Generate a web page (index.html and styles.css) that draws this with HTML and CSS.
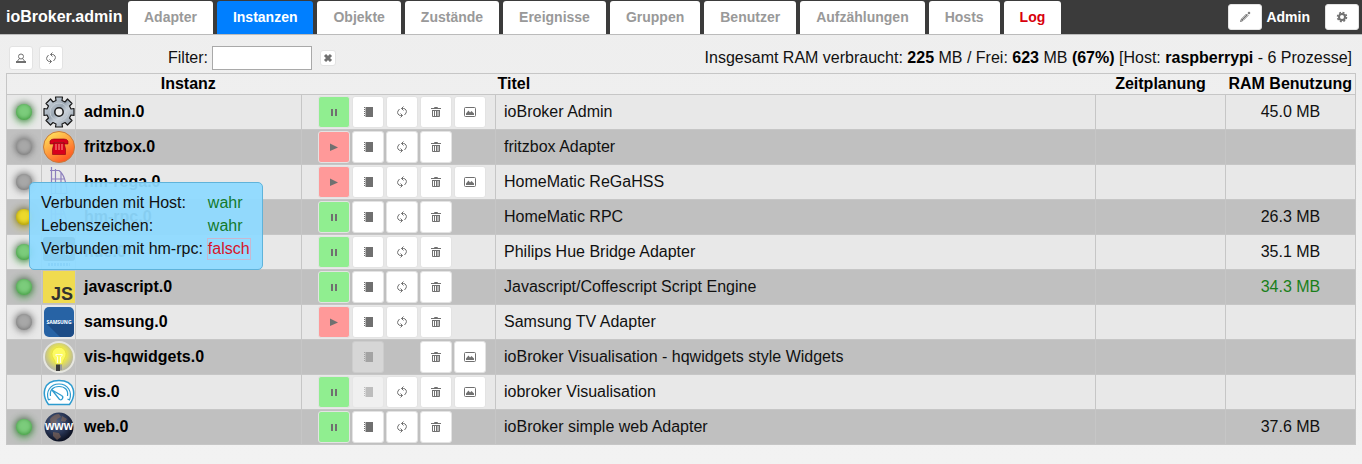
FILE: index.html
```html
<!DOCTYPE html>
<html lang="de">
<head>
    <meta charset="utf-8">
    <title>ioBroker.admin</title>
    <link rel="stylesheet" href="styles.css">
</head>
<body>
    <!-- Symbole für die Schaltflächen -->
    <svg class="symbols" aria-hidden="true">
        <symbol id="i-pause" viewBox="0 0 12 12"><path d="M3 3h2v7H3zM7 3h2v7H7z"/></symbol>
        <symbol id="i-play" viewBox="0 0 12 12"><path d="M2 2.500L10 6.500L2 10z"/></symbol>
        <symbol id="i-book" viewBox="0 0 12 12"><path d="M4 1h7v10H4zM2 1h1v1H2zM2 3h1v1H2zM2 5h1v1H2zM2 7h1v1H2zM2 9h1v1H2z"/><path opacity=".5" d="M3 1h1v10H3z"/></symbol>
        <symbol id="i-refresh" viewBox="0 0 12 12"><path fill="none" stroke="currentColor" d="M5.500 2.500h2a3 3 0 0 1 2.500 4.500L8.500 9M7.500.500l-2 2 2 2M6.500 9.500h-2A3 3 0 0 1 2 5L3.500 3M4.500 7.500l2 2-2 2"/></symbol>
        <symbol id="i-trash" viewBox="0 0 12 12"><path fill="none" stroke="currentColor" d="M4.500 2V1.500h3V2M2.500 5v5.500h7V5M4.500 5v5M6.500 5v5M8 5v5"/><path d="M1 2h10v1H1zM2 4h8v1H2z"/></symbol>
        <symbol id="i-image" viewBox="0 0 12 12"><rect x=".5" y="1.500" width="11" height="9" rx="1" fill="none" stroke="currentColor"/><path d="M2 9V7.500L4.500 4.500 6 6.500 7.500 5 10 7.500V9z"/></symbol>
        <symbol id="i-person" viewBox="0 0 12 12"><circle cx="6" cy="4.500" r="2.500" fill="none" stroke="currentColor"/><path fill="none" stroke="currentColor" d="M4.500 6.500L2.500 9M7.500 6.500L9.500 9"/><path d="M1 9h10v2H1z"/></symbol>
        <symbol id="i-pencil" viewBox="0 0 12 12"><path fill="none" stroke="currentColor" d="M1.500 10.500L2.500 8l5-5L9 4.500l-5 5zM3 9l5-5"/><path d="M8.500 2l1.500-1.500L11.500 2 10 3.500z"/></symbol>
        <symbol id="i-gear" viewBox="0 0 12 12"><circle cx="6" cy="6" r="3" fill="none" stroke="currentColor" stroke-width="2"/><circle cx="6" cy="6" r="4.500" fill="none" stroke="currentColor" stroke-width="1.500" stroke-dasharray="2 1.530"/></symbol>
        <symbol id="i-close" viewBox="0 0 12 12"><path fill="none" stroke="currentColor" stroke-width="3" d="M3 3l6 6M9 3l-6 6"/></symbol>
    </svg>

    <header class="topbar">
        <span class="brand">ioBroker.admin</span>
        <nav class="tabs">
            <a href="#adapter">Adapter</a>
            <a href="#instanzen" class="active">Instanzen</a>
            <a href="#objekte">Objekte</a>
            <a href="#zustaende">Zustände</a>
            <a href="#ereignisse">Ereignisse</a>
            <a href="#gruppen">Gruppen</a>
            <a href="#benutzer">Benutzer</a>
            <a href="#aufzaehlungen">Aufzählungen</a>
            <a href="#hosts">Hosts</a>
            <a href="#log" class="error">Log</a>
        </nav>
        <div class="user">
            <button class="btn btn-top" aria-label="Bearbeiten"><svg><use href="#i-pencil"/></svg></button>
            <span class="user-name">Admin</span>
            <button class="btn btn-top" aria-label="Einstellungen"><svg><use href="#i-gear"/></svg></button>
        </div>
    </header>

    <main>
        <div class="toolbar">
            <button class="btn btn-tool" aria-label="Expertenmodus"><svg><use href="#i-person"/></svg></button>
            <button class="btn btn-tool" aria-label="Aktualisieren"><svg><use href="#i-refresh"/></svg></button>
            <div class="filter">
                <label for="filter">Filter:</label>
                <input type="text" id="filter">
                <button class="btn btn-clear" aria-label="Filter löschen"><svg><use href="#i-close"/></svg></button>
            </div>
            <div class="summary">Insgesamt RAM verbraucht: <b>225</b> MB / Frei: <b>623</b> MB <b>(67%)</b> [Host: <b>raspberrypi</b> - 6 Prozesse]</div>
        </div>

        <table class="instances">
            <colgroup>
                <col class="c-state"><col class="c-icon"><col class="c-name"><col class="c-actions"><col><col class="c-plan"><col class="c-ram">
            </colgroup>
            <thead>
                <tr>
                    <th colspan="3" class="h-name">Instanz</th>
                    <th></th>
                    <th class="h-title">Titel</th>
                    <th>Zeitplanung</th>
                    <th>RAM Benutzung</th>
                </tr>
            </thead>
            <tbody>
                <tr>
                    <td><span class="led green"></span></td>
                    <td class="icon">
                        <svg viewBox="0 0 32 32">
                            <defs><linearGradient id="steel" x1="0" y1="0" x2="1" y2="1"><stop offset="0" stop-color="#dce3ea"/><stop offset=".45" stop-color="#9aa6b2"/><stop offset=".6" stop-color="#c9d1d9"/><stop offset="1" stop-color="#7f8b97"/></linearGradient></defs>
                            <path fill="url(#steel)" stroke="#1a1a1a" stroke-width="1.200" stroke-linejoin="round" d="M13 4.500L12.500 1h7L19 4.500l3 1.500 2.500-3 4.500 4.500-2.500 2.500 1.500 3 3-.5v7l-3-.5-1.500 3 2.500 2.500-4.500 4.500-2.500-2.500-3 1.500.5 3h-7l.5-3-3-1.500L7.500 29 3 24.500 5.500 22 4 19l-3 .5v-7l3 .5 1.500-3L3 7.500 7.500 3 10 6z"/>
                            <circle cx="16" cy="16" r="9" fill="none" stroke="#c3ccd4"/>
                            <circle cx="16" cy="16" r="4.200" fill="#eee" stroke="#1a1a1a" stroke-width="1.500"/>
                        </svg>
                    </td>
                    <td class="name">admin.0</td>
                    <td><div class="actions">
                        <button class="btn run" aria-label="Anhalten"><svg><use href="#i-pause"/></svg></button>
                        <button class="btn" aria-label="Konfiguration"><svg><use href="#i-book"/></svg></button>
                        <button class="btn" aria-label="Neu starten"><svg><use href="#i-refresh"/></svg></button>
                        <button class="btn" aria-label="Löschen"><svg><use href="#i-trash"/></svg></button>
                        <button class="btn" aria-label="Öffnen"><svg><use href="#i-image"/></svg></button>
                    </div></td>
                    <td class="title">ioBroker Admin</td>
                    <td></td>
                    <td class="ram">45.0 MB</td>
                </tr>
                <tr>
                    <td><span class="led"></span></td>
                    <td class="icon">
                        <svg viewBox="0 0 32 32">
                            <defs><linearGradient id="fire" x1=".2" y1="0" x2=".8" y2="1"><stop offset="0" stop-color="#ffe45c"/><stop offset=".5" stop-color="#ff9a3c"/><stop offset="1" stop-color="#ff4a1c"/></linearGradient></defs>
                            <circle cx="16" cy="16" r="15.500" fill="url(#fire)" stroke="#c87a3a"/>
                            <path fill="#d8001c" stroke="#8a0012" stroke-width=".6" d="M7 13V10q1-2 4-2h10q3 0 4 2v3h-4v-1.500H11V13z"/>
                            <path fill="#d8001c" stroke="#8a0012" stroke-width=".6" d="M11 12h10l1.500 6v5.500h-13V18z"/>
                            <path stroke="#ff9a8a" stroke-width="1" d="M13 13v6M16 13v6M19 13v6"/>
                        </svg>
                    </td>
                    <td class="name">fritzbox.0</td>
                    <td><div class="actions">
                        <button class="btn stopped" aria-label="Starten"><svg><use href="#i-play"/></svg></button>
                        <button class="btn" aria-label="Konfiguration"><svg><use href="#i-book"/></svg></button>
                        <button class="btn" aria-label="Neu starten"><svg><use href="#i-refresh"/></svg></button>
                        <button class="btn" aria-label="Löschen"><svg><use href="#i-trash"/></svg></button>
                    </div></td>
                    <td class="title">fritzbox Adapter</td>
                    <td></td>
                    <td class="ram"></td>
                </tr>
                <tr>
                    <td><span class="led"></span></td>
                    <td class="icon">
                        <svg viewBox="0 0 32 32"><path fill="none" stroke="#8d7fbd" stroke-width="1.200" d="M8.500 1v28M12.500 3v25M7 4.500h9q7 5 8 23M8 13h13M8 27.500h16M18 6v21"/></svg>
                    </td>
                    <td class="name">hm-rega.0</td>
                    <td><div class="actions">
                        <button class="btn stopped" aria-label="Starten"><svg><use href="#i-play"/></svg></button>
                        <button class="btn" aria-label="Konfiguration"><svg><use href="#i-book"/></svg></button>
                        <button class="btn" aria-label="Neu starten"><svg><use href="#i-refresh"/></svg></button>
                        <button class="btn" aria-label="Löschen"><svg><use href="#i-trash"/></svg></button>
                        <button class="btn" aria-label="Öffnen"><svg><use href="#i-image"/></svg></button>
                    </div></td>
                    <td class="title">HomeMatic ReGaHSS</td>
                    <td></td>
                    <td class="ram"></td>
                </tr>
                <tr>
                    <td class="state">
                        <span class="led yellow"></span>
                        <div class="tooltip">
                            <dl>
                                <dt>Verbunden mit Host:</dt><dd class="true">wahr</dd>
                                <dt>Lebenszeichen:</dt><dd class="true">wahr</dd>
                                <dt>Verbunden mit hm-rpc:</dt><dd class="false">falsch</dd>
                            </dl>
                        </div>
                    </td>
                    <td class="icon">
                        <svg viewBox="0 0 32 32"><path fill="none" stroke="#8d7fbd" stroke-width="1.200" d="M8.500 1v28M12.500 3v25M7 4.500h9q7 5 8 23M8 13h13M8 27.500h16M18 6v21"/></svg>
                    </td>
                    <td class="name">hm-rpc.0</td>
                    <td><div class="actions">
                        <button class="btn run" aria-label="Anhalten"><svg><use href="#i-pause"/></svg></button>
                        <button class="btn" aria-label="Konfiguration"><svg><use href="#i-book"/></svg></button>
                        <button class="btn" aria-label="Neu starten"><svg><use href="#i-refresh"/></svg></button>
                        <button class="btn" aria-label="Löschen"><svg><use href="#i-trash"/></svg></button>
                    </div></td>
                    <td class="title">HomeMatic RPC</td>
                    <td></td>
                    <td class="ram">26.3 MB</td>
                </tr>
                <tr>
                    <td><span class="led green"></span></td>
                    <td class="icon">
                        <svg viewBox="0 0 32 32"><rect y="1" width="32" height="24" rx="3" fill="#222"/><path fill="none" stroke="#fff" stroke-width="2" d="M6 8v10M6 13h5v5M14 12v5h5v-5M28 18h-5v-5h5v2h-5"/><path stroke="#3a6ea5" stroke-width="3" stroke-dasharray="2 1" d="M5 28.500h22"/></svg>
                    </td>
                    <td class="name">hue.0</td>
                    <td><div class="actions">
                        <button class="btn run" aria-label="Anhalten"><svg><use href="#i-pause"/></svg></button>
                        <button class="btn" aria-label="Konfiguration"><svg><use href="#i-book"/></svg></button>
                        <button class="btn" aria-label="Neu starten"><svg><use href="#i-refresh"/></svg></button>
                        <button class="btn" aria-label="Löschen"><svg><use href="#i-trash"/></svg></button>
                    </div></td>
                    <td class="title">Philips Hue Bridge Adapter</td>
                    <td></td>
                    <td class="ram">35.1 MB</td>
                </tr>
                <tr>
                    <td><span class="led green"></span></td>
                    <td class="icon">
                        <svg viewBox="0 0 32 32"><rect width="32" height="32" fill="#f0db4f"/><text x="8" y="29" class="js-logo">JS</text></svg>
                    </td>
                    <td class="name">javascript.0</td>
                    <td><div class="actions">
                        <button class="btn run" aria-label="Anhalten"><svg><use href="#i-pause"/></svg></button>
                        <button class="btn" aria-label="Konfiguration"><svg><use href="#i-book"/></svg></button>
                        <button class="btn" aria-label="Neu starten"><svg><use href="#i-refresh"/></svg></button>
                        <button class="btn" aria-label="Löschen"><svg><use href="#i-trash"/></svg></button>
                    </div></td>
                    <td class="title">Javascript/Coffescript Script Engine</td>
                    <td></td>
                    <td class="ram changed">34.3 MB</td>
                </tr>
                <tr>
                    <td><span class="led"></span></td>
                    <td class="icon">
                        <svg viewBox="0 0 32 32"><rect x="1" y="1" width="30" height="30" rx="5" fill="#2763a5"/><path fill="#1d4c86" d="M4 18h24l3-1v9q0 5-5 5H17z"/><text x="16" y="18" class="samsung-logo">SAMSUNG</text></svg>
                    </td>
                    <td class="name">samsung.0</td>
                    <td><div class="actions">
                        <button class="btn stopped" aria-label="Starten"><svg><use href="#i-play"/></svg></button>
                        <button class="btn" aria-label="Konfiguration"><svg><use href="#i-book"/></svg></button>
                        <button class="btn" aria-label="Neu starten"><svg><use href="#i-refresh"/></svg></button>
                        <button class="btn" aria-label="Löschen"><svg><use href="#i-trash"/></svg></button>
                    </div></td>
                    <td class="title">Samsung TV Adapter</td>
                    <td></td>
                    <td class="ram"></td>
                </tr>
                <tr>
                    <td></td>
                    <td class="icon">
                        <svg viewBox="0 0 32 32">
                            <defs><radialGradient id="glow" cx=".5" cy=".42" r=".5"><stop offset="0" stop-color="#ffff6a"/><stop offset=".5" stop-color="#ece84a"/><stop offset="1" stop-color="#b9b8a0"/></radialGradient></defs>
                            <circle cx="16" cy="16" r="15" fill="url(#glow)" stroke="#e6e6e0" stroke-width="2"/>
                            <path fill="#fdfb62" stroke="#dcd63a" stroke-width=".6" d="M12.500 23q0-3-2-5.500a7 7 0 1 1 11 0q-2 2.500-2 5.500z"/>
                            <path fill="none" stroke="#fffde0" d="M14.500 22v-6l-2-2M17.500 22v-6l2-2M12.500 13.500h7"/>
                            <path fill="#3a3a3a" d="M13 23.500h4V30h-4z"/><path fill="#999" d="M17 23.500h2V29h-2z"/>
                        </svg>
                    </td>
                    <td class="name">vis-hqwidgets.0</td>
                    <td><div class="actions">
                        <span class="gap"></span>
                        <button class="btn" disabled aria-label="Konfiguration"><svg><use href="#i-book"/></svg></button>
                        <span class="gap"></span>
                        <button class="btn" aria-label="Löschen"><svg><use href="#i-trash"/></svg></button>
                        <button class="btn" aria-label="Öffnen"><svg><use href="#i-image"/></svg></button>
                    </div></td>
                    <td class="title">ioBroker Visualisation - hqwidgets style Widgets</td>
                    <td></td>
                    <td class="ram"></td>
                </tr>
                <tr>
                    <td></td>
                    <td class="icon">
                        <svg viewBox="0 0 32 32" fill="none" stroke="#2d9bcf">
                            <path fill="#fff" stroke-width="1.500" d="M5.500 28.500C-1.500 19-.500 4.500 16 4.500S33.500 19 26.500 28.500z"/>
                            <path stroke-width="1.200" d="M5.500 24C2.500 16 7 8 16 8s13.500 8 10.500 16l-2-1M5.500 24l2-1M7.500 20C6.500 14 10 10.500 16 10.500S25.500 14 24.500 20"/>
                            <path stroke-width="1.300" d="M9 14l9.500 5.500a2 2 0 0 1-2 4z"/>
                        </svg>
                    </td>
                    <td class="name">vis.0</td>
                    <td><div class="actions">
                        <button class="btn run" aria-label="Anhalten"><svg><use href="#i-pause"/></svg></button>
                        <button class="btn" disabled aria-label="Konfiguration"><svg><use href="#i-book"/></svg></button>
                        <button class="btn" aria-label="Neu starten"><svg><use href="#i-refresh"/></svg></button>
                        <button class="btn" aria-label="Löschen"><svg><use href="#i-trash"/></svg></button>
                        <button class="btn" aria-label="Öffnen"><svg><use href="#i-image"/></svg></button>
                    </div></td>
                    <td class="title">iobroker Visualisation</td>
                    <td></td>
                    <td class="ram"></td>
                </tr>
                <tr>
                    <td><span class="led green"></span></td>
                    <td class="icon">
                        <svg viewBox="0 0 32 32">
                            <defs><radialGradient id="earth" cx=".4" cy=".35" r=".65"><stop offset="0" stop-color="#56698c"/><stop offset=".6" stop-color="#283554"/><stop offset="1" stop-color="#0d1222"/></radialGradient></defs>
                            <circle cx="16" cy="16" r="14.500" fill="url(#earth)"/>
                            <path fill="#8a6a58" opacity=".6" d="M7 8q4-5 9-5l2 3-4 2-1 4-5 1zM19 5l5 3-2 3-4-1zM10 21l6 1 2 4-4 3-4-4z"/>
                            <text x="16" y="19" class="www-logo">www</text>
                        </svg>
                    </td>
                    <td class="name">web.0</td>
                    <td><div class="actions">
                        <button class="btn run" aria-label="Anhalten"><svg><use href="#i-pause"/></svg></button>
                        <button class="btn" aria-label="Konfiguration"><svg><use href="#i-book"/></svg></button>
                        <button class="btn" aria-label="Neu starten"><svg><use href="#i-refresh"/></svg></button>
                        <button class="btn" aria-label="Löschen"><svg><use href="#i-trash"/></svg></button>
                    </div></td>
                    <td class="title">ioBroker simple web Adapter</td>
                    <td></td>
                    <td class="ram">37.6 MB</td>
                </tr>
            </tbody>
        </table>
    </main>
</body>
</html>
```
FILE: styles.css
```css
* {
    box-sizing: border-box;
}

body {
    margin: 0;
    min-height: 100vh;
    font-family: "Liberation Sans", Arial, sans-serif;
    font-size: 16px;
    line-height: 20px;
    color: #111;
    background: linear-gradient(#eee, #f2f2f2);
}

.symbols {
    display: none;
}

/* Kopfzeile */
.topbar {
    display: flex;
    align-items: flex-end;
    height: 35px;
    padding: 0 3px 0 6px;
    background: #3b3b3b;
    border-bottom: 1px solid #bbb;
}

.brand {
    width: 122px;
    align-self: center;
    color: #fff;
    font-weight: bold;
}

.tabs {
    display: flex;
    gap: 4px;
}

.tabs a {
    padding: 7px 16px;
    background: #fff;
    border-radius: 3px 3px 0 0;
    color: #999;
    font-size: 14px;
    line-height: 19px;
    font-weight: bold;
    text-decoration: none;
}

.tabs a.active {
    background: #007fff;
    color: #fff;
}

.tabs a.error {
    color: #d8000c;
}

.user {
    display: flex;
    align-items: center;
    align-self: center;
    gap: 4px;
    margin-left: auto;
}

.user-name {
    margin-right: 11px;
    color: #fff;
    font-size: 14px;
    font-weight: bold;
}

/* Schaltflächen */
.btn {
    display: flex;
    align-items: center;
    justify-content: center;
    flex: none;
    width: 32px;
    height: 32px;
    padding: 0;
    background: #fff;
    border: 1px solid #e3e3e3;
    border-radius: 3px;
    color: #707070;
}

.btn svg {
    width: 12px;
    height: 12px;
    fill: currentColor;
}

.btn:disabled {
    opacity: 0.35;
}

.btn.run {
    background: #90ee90;
}

.btn.stopped {
    background: #ff9999;
}

.btn-top {
    width: 34px;
    height: 26px;
}

.btn-tool {
    width: 24px;
    height: 24px;
}

.btn-clear {
    width: 16px;
    height: 16px;
}

main {
    padding: 0 6px;
}

.toolbar {
    display: flex;
    align-items: center;
    gap: 6px;
    height: 38px;
    padding: 8px 4px 0 3px;
}

.filter {
    display: flex;
    align-items: center;
    gap: 4px;
    margin-left: 99px;
}

.filter input {
    width: 100px;
    height: 24px;
    border: 1px solid #a9a9a9;
    background: #fff;
}

.filter .btn {
    margin-left: 4px;
}

.summary {
    margin-left: auto;
}

.summary b {
    color: #000;
}

/* Tabelle der Instanzen */
.instances {
    width: 100%;
    table-layout: fixed;
    border-collapse: collapse;
    border: 1px solid #c6c6c6;
}

.c-state {
    width: 35px;
}

.c-icon {
    width: 34px;
}

.c-name {
    width: 226px;
}

.c-actions {
    width: 194px;
}

.c-plan,
.c-ram {
    width: 130px;
}

th {
    height: 21px;
    padding: 0;
    color: #000;
}

.h-name {
    padding-left: 68px;
}

.h-title {
    padding-left: 2px;
    text-align: left;
}

td {
    height: 35px;
    padding: 0;
    border: 1px solid #c6c6c6;
}

tbody tr:nth-child(odd) {
    background: #e8e8e8;
}

tbody tr:nth-child(even) {
    background: #c0c0c0;
}

.icon svg {
    display: block;
    width: 32px;
    height: 32px;
    margin: auto;
}

.name {
    padding-left: 8px;
    color: #000;
    font-weight: bold;
}

.title {
    padding-left: 8px;
}

.ram {
    text-align: center;
}

.changed {
    color: #1a7f1a;
}

.actions {
    display: flex;
    gap: 2px;
    padding-left: 16px;
}

.gap {
    width: 32px;
}

.led {
    display: block;
    width: 16px;
    height: 16px;
    margin: auto;
    border-radius: 50%;
    background: #a8a8a8;
    box-shadow: 0 -1px 6px 1px rgba(0, 0, 0, 0.35), inset 0 -1px 4px #777, 0 2px 8px #aaa;
}

.led.green {
    background: #7ccc7c;
    box-shadow: 0 -1px 6px 1px rgba(0, 0, 0, 0.35), inset 0 -1px 4px #3c963c, 0 2px 8px #4fb04f;
}

.led.yellow {
    background: #ecd92c;
    box-shadow: 0 -1px 6px 1px rgba(0, 0, 0, 0.35), inset 0 -1px 4px #a09000, 0 2px 8px #c8b820;
}

.state {
    position: relative;
}

.tooltip {
    position: absolute;
    z-index: 1;
    top: -18px;
    left: 22px;
    padding: 9px 11px;
    background: rgba(142, 218, 255, 0.94);
    border: 1px solid #5fb3da;
    border-radius: 5px;
    white-space: nowrap;
}

.tooltip dl {
    display: grid;
    grid-template-columns: auto auto;
    gap: 1px 4px;
    margin: 0;
    line-height: 22px;
}

.tooltip dd {
    margin: 0;
    border: 1px solid transparent;
    line-height: 20px;
}

.true {
    color: #137a2b;
}

.tooltip .false {
    color: #d8142a;
    border-color: #c9b7d0;
}

/* Schriftzüge in den Adaptersymbolen */
.js-logo {
    font: bold 18px "Liberation Sans", sans-serif;
    fill: #323330;
}

.samsung-logo {
    font: bold 5px "Open Sans", sans-serif;
    text-anchor: middle;
    fill: #fff;
}

.www-logo {
    font: bold 12px "Liberation Sans", sans-serif;
    text-anchor: middle;
    fill: #fff;
}
```
